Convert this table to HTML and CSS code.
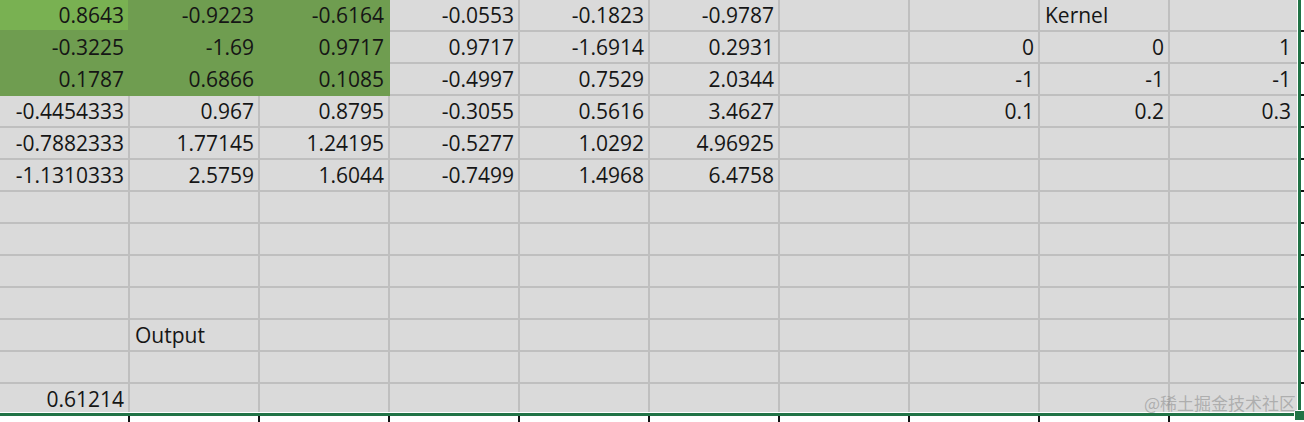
FILE: index.html
```html
<!DOCTYPE html>
<html>
<head>
<meta charset="utf-8">
<link rel="stylesheet" href="styles.css">
</head>
<body>
<div class="page">
  <div class="frame">
    <div class="sheet">
      <div class="row"><div class="c g a">0.8643</div><div class="c g">-0.9223</div><div class="c g">-0.6164</div><div class="c">-0.0553</div><div class="c">-0.1823</div><div class="c">-0.9787</div><div class="c"></div><div class="c"></div><div class="c t">Kernel</div><div class="c"></div></div>
      <div class="row"><div class="c g">-0.3225</div><div class="c g">-1.69</div><div class="c g">0.9717</div><div class="c">0.9717</div><div class="c">-1.6914</div><div class="c">0.2931</div><div class="c"></div><div class="c">0</div><div class="c">0</div><div class="c">1</div></div>
      <div class="row"><div class="c g">0.1787</div><div class="c g">0.6866</div><div class="c g">0.1085</div><div class="c">-0.4997</div><div class="c">0.7529</div><div class="c">2.0344</div><div class="c"></div><div class="c">-1</div><div class="c">-1</div><div class="c">-1</div></div>
      <div class="row"><div class="c">-0.4454333</div><div class="c">0.967</div><div class="c">0.8795</div><div class="c">-0.3055</div><div class="c">0.5616</div><div class="c">3.4627</div><div class="c"></div><div class="c">0.1</div><div class="c">0.2</div><div class="c">0.3</div></div>
      <div class="row"><div class="c">-0.7882333</div><div class="c">1.77145</div><div class="c">1.24195</div><div class="c">-0.5277</div><div class="c">1.0292</div><div class="c">4.96925</div><div class="c"></div><div class="c"></div><div class="c"></div><div class="c"></div></div>
      <div class="row"><div class="c">-1.1310333</div><div class="c">2.5759</div><div class="c">1.6044</div><div class="c">-0.7499</div><div class="c">1.4968</div><div class="c">6.4758</div><div class="c"></div><div class="c"></div><div class="c"></div><div class="c"></div></div>
      <div class="row"><div class="c"></div><div class="c"></div><div class="c"></div><div class="c"></div><div class="c"></div><div class="c"></div><div class="c"></div><div class="c"></div><div class="c"></div><div class="c"></div></div>
      <div class="row"><div class="c"></div><div class="c"></div><div class="c"></div><div class="c"></div><div class="c"></div><div class="c"></div><div class="c"></div><div class="c"></div><div class="c"></div><div class="c"></div></div>
      <div class="row"><div class="c"></div><div class="c"></div><div class="c"></div><div class="c"></div><div class="c"></div><div class="c"></div><div class="c"></div><div class="c"></div><div class="c"></div><div class="c"></div></div>
      <div class="row"><div class="c"></div><div class="c"></div><div class="c"></div><div class="c"></div><div class="c"></div><div class="c"></div><div class="c"></div><div class="c"></div><div class="c"></div><div class="c"></div></div>
      <div class="row"><div class="c"></div><div class="c t">Output</div><div class="c"></div><div class="c"></div><div class="c"></div><div class="c"></div><div class="c"></div><div class="c"></div><div class="c"></div><div class="c"></div></div>
      <div class="row"><div class="c"></div><div class="c"></div><div class="c"></div><div class="c"></div><div class="c"></div><div class="c"></div><div class="c"></div><div class="c"></div><div class="c"></div><div class="c"></div></div>
      <div class="row"><div class="c">0.61214</div><div class="c"></div><div class="c"></div><div class="c"></div><div class="c"></div><div class="c"></div><div class="c"></div><div class="c"></div><div class="c"></div><div class="c"></div></div>
    </div>
  </div>
  <div class="rticks">
    <i></i><i></i><i></i><i></i><i></i><i></i><i></i><i></i><i></i><i></i><i></i><i></i>
  </div>
  <div class="bticks">
    <i></i><i></i><i></i><i></i><i></i><i></i><i></i><i></i><i></i>
  </div>
  <div class="corner"></div>
  <div class="handle"></div>
  <div class="watermark">@稀土掘金技术社区</div>
</div>
</body>
</html>
```

FILE: styles.css
```css
html, body {
  margin: 0;
  padding: 0;
  background: #ffffff;
}

.page {
  position: relative;
  width: 1304px;
  height: 422px;
  display: grid;
  grid-template-columns: 1301px 3px;
  grid-template-rows: 416px 6px;
  overflow: hidden;
  font-family: "Open Sans", "Noto Sans", sans-serif;
  color: #151515;
}

.frame {
  border-right: 3px solid #217346;
  border-bottom: 3px solid #217346;
}

.sheet {
  width: 1297px;
  height: 412px;
  border-right: 1px solid #ffffff;
  border-bottom: 1px solid #ffffff;
  background: #dadada;
}

.row {
  display: flex;
  height: 32px;
}

.row:last-child {
  height: 28px;
}

.c {
  box-sizing: border-box;
  flex: 0 0 130px;
  height: 100%;
  border-right: 2px solid #bfbfbf;
  border-bottom: 2px solid #bfbfbf;
  background: #dadada;
  font-size: 21px;
  line-height: 31px;
  text-align: right;
  padding: 0 4px 0 5px;
  white-space: nowrap;
  overflow: hidden;
}

.c:last-child {
  flex-basis: 127px;
  border-right: none;
  padding-right: 6px;
}

.row:last-child .c {
  border-bottom: none;
  line-height: 31px;
}

.c.t {
  text-align: left;
}

.c.g {
  background: #6f9d50;
  border-color: #6f9d50;
}

.c.a {
  background: #79b152;
}

.rticks {
  display: flex;
  flex-direction: column;
  padding-top: 30px;
  gap: 30px;
}

.rticks i {
  display: block;
  height: 2px;
  width: 3px;
  background: #111111;
}

.bticks {
  display: flex;
  padding-left: 128px;
  gap: 128px;
}

.bticks i {
  display: block;
  width: 2px;
  height: 6px;
  background: #111111;
}

.corner {
  background: #ffffff;
}

.handle {
  position: absolute;
  left: 1294px;
  top: 410px;
  width: 9px;
  height: 9px;
  background: #217346;
  border: 1px solid #ffffff;
}

.watermark {
  position: absolute;
  right: 8px;
  top: 393px;
  font-family: "Noto Sans CJK SC", "Noto Sans", sans-serif;
  font-size: 17px;
  line-height: 20px;
  color: rgba(130, 130, 130, 0.5);
}
```
